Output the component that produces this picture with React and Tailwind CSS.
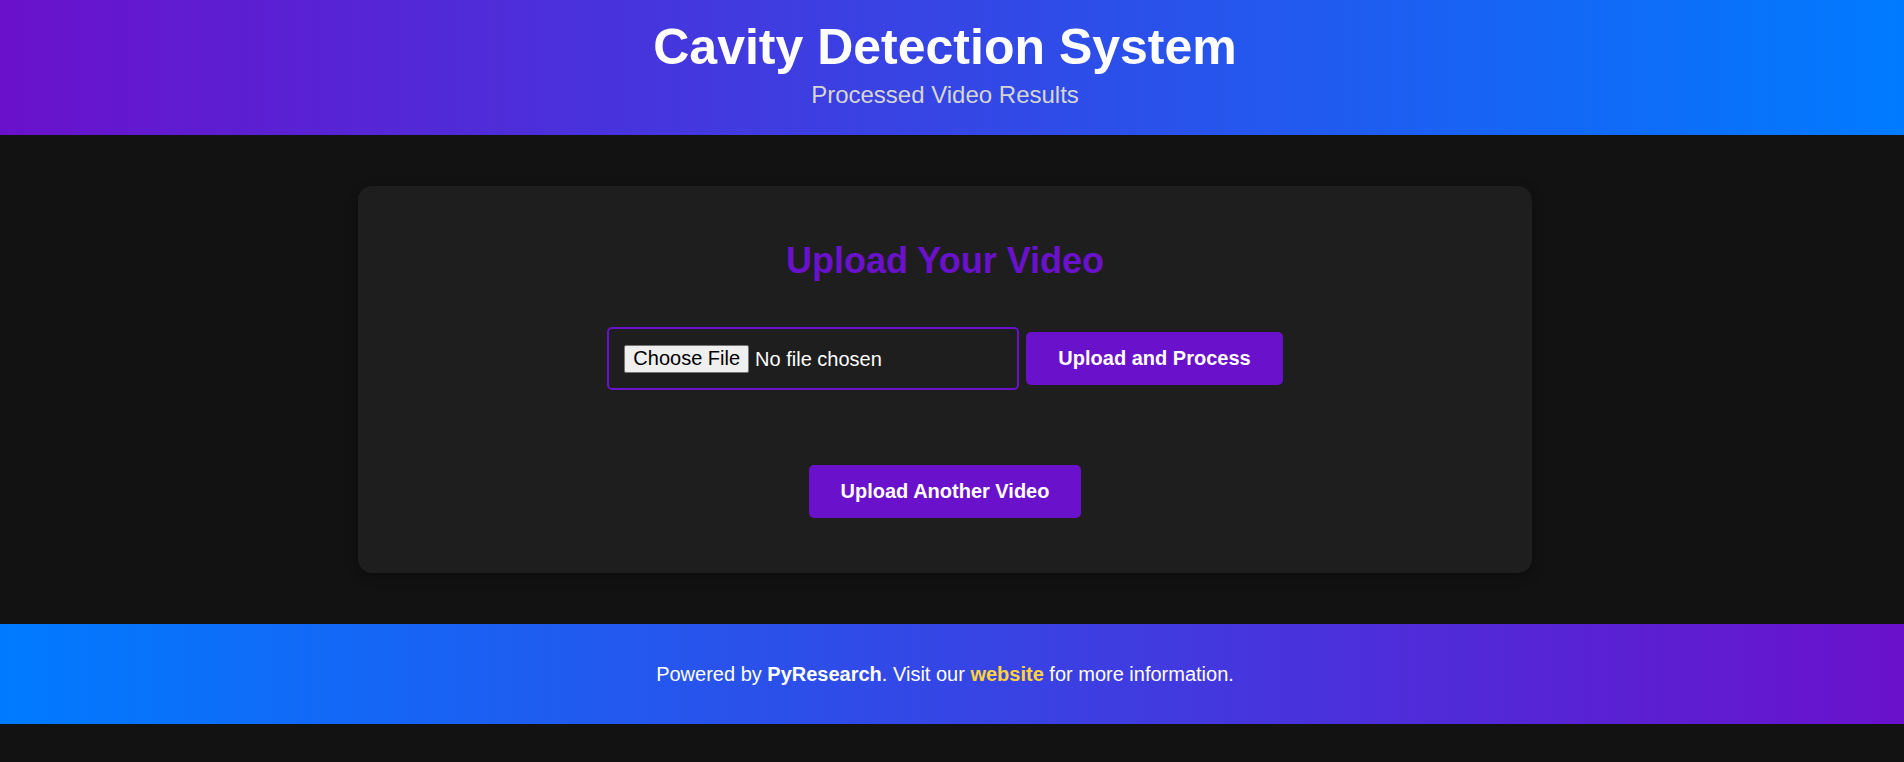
import React from 'react';

const UploadCard = () => {
  return (
    <div className="w-[1174px] bg-[#1e1e1e] rounded-[14px] shadow-[0_4px_12px_rgba(0,0,0,0.35)] pt-[54px] pb-[55px] flex flex-col items-center">
      <h2 className="text-[36px] leading-[41px] font-bold text-[#6a11cb] mb-[46px]">Upload Your Video</h2>

      <form className="flex items-center justify-center gap-[7px]" onSubmit={(e) => e.preventDefault()}>
        <input
          type="file"
          accept="video/*"
          className="w-[412px] border-2 border-[#6a11cb] rounded-[5px] px-[15px] py-[15.5px] text-white text-[20px] leading-[23px] bg-transparent file:bg-[#efefef] file:text-black file:border file:border-[#767676] file:rounded-[2px] file:px-[8px] file:py-[1.5px] file:mr-[6px] file:leading-[23px]"
        />
        <button
          type="submit"
          className="bg-[#6a11cb] text-white font-bold text-[20px] leading-[23px] px-[32px] py-[15px] rounded-[5px]"
        >
          Upload and Process
        </button>
      </form>

      <button className="mt-[75px] bg-[#6a11cb] text-white font-bold text-[20px] leading-[23px] px-[32px] py-[15px] rounded-[5px]">
        Upload Another Video
      </button>
    </div>
  );
};

export default function App() {
  return (
    <div className="min-h-screen bg-[#121212] font-['Liberation_Sans',Arial,sans-serif]">
      {/* Header */}
      <header className="bg-linear-to-r/srgb from-[#6a11cb] to-[#007bff] h-[135px] pt-[19px] pr-[14px] flex flex-col items-center">
        <h1 className="text-white font-bold text-[50px] leading-[57px]">Cavity Detection System</h1>
        <p className="text-[#d6d6d6] text-[24px] leading-[28px] mt-[5px]">Processed Video Results</p>
      </header>

      <main className="py-[51px] pr-[14px] flex justify-center">
        <UploadCard />
      </main>

      {/* Footer */}
      <footer className="bg-linear-to-r/srgb from-[#007bff] to-[#6a11cb] h-[100px] pr-[14px] flex items-center justify-center">
        <p className="text-white text-[20px] leading-[23px]">
          Powered by <span className="font-bold">PyResearch</span>. Visit our{' '}
          <a href="#" className="font-bold text-[#ffd43b]">website</a> for more information.
        </p>
      </footer>
    </div>
  );
}
